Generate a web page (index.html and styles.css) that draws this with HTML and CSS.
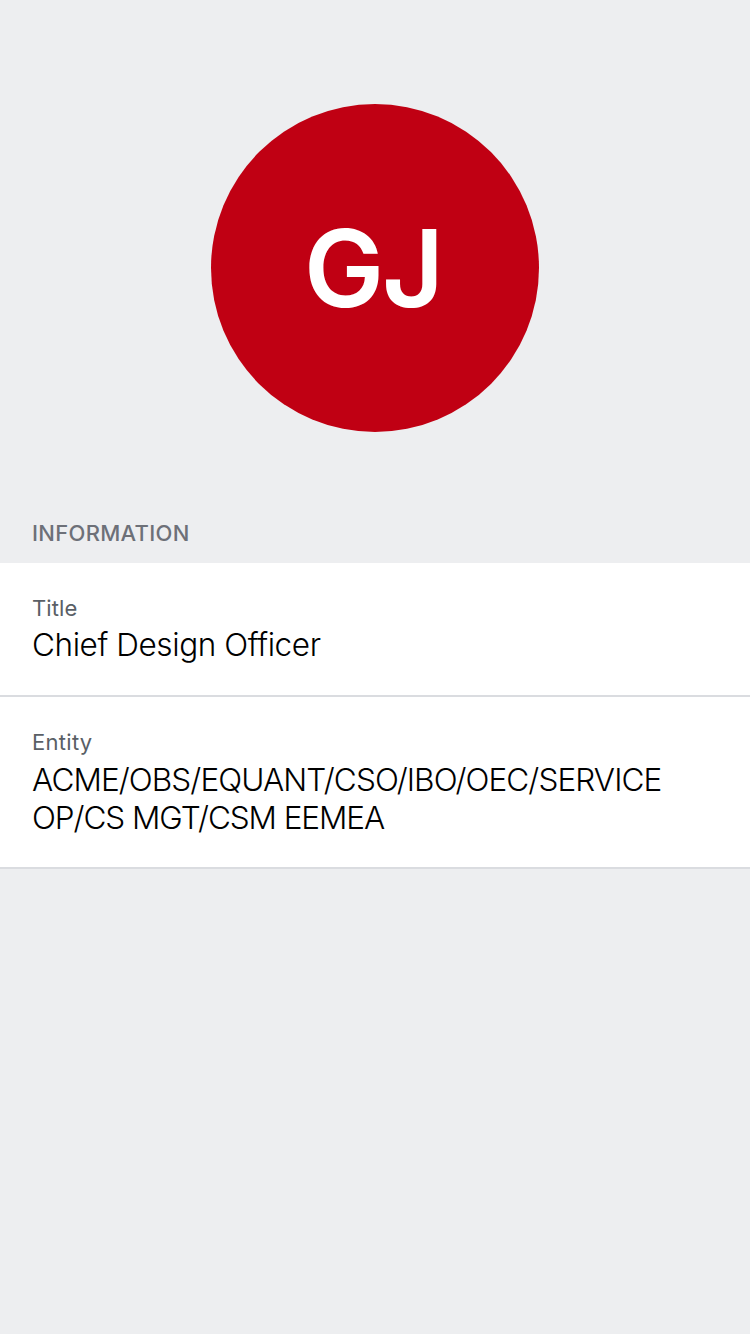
FILE: index.html
```html
<!DOCTYPE html>
<html lang="en">
<head>
<meta charset="utf-8">
<title>Profile</title>
<link rel="stylesheet" href="styles.css">
</head>
<body>
<main class="profile">
  <header class="hero">
    <div class="avatar"><span class="initials">GJ</span></div>
  </header>
  <h2 class="section-title">INFORMATION</h2>
  <dl class="info">
    <div class="row">
      <dt class="label label-title">Title</dt>
      <dd class="value value-title">Chief Design Officer</dd>
    </div>
    <div class="row row-entity">
      <dt class="label">Entity</dt>
      <dd class="value value-entity">ACME/OBS/EQUANT/CSO/IBO/OEC/SERVICE<br><span class="entity-end">OP/CS MGT/CSM EEMEA</span></dd>
    </div>
  </dl>
</main>
</body>
</html>
```
FILE: styles.css
```css
* { box-sizing: border-box; }
body {
  margin: 0;
  background: #edeef0;
  font-family: Inter, "Liberation Sans", sans-serif;
  color: #000;
}
.profile { min-height: 1334px; }
.hero {
  display: flex;
  justify-content: center;
  padding: 104px 0 88px;
}
.avatar {
  display: flex;
  align-items: center;
  justify-content: center;
  width: 328px;
  height: 328px;
  border-radius: 50%;
  background: #c00013;
}
.initials {
  padding: 1px 4px 0 0;
  color: #fff;
  font-size: 107px;
  font-weight: 570;
  line-height: 1;
  letter-spacing: -2.2px;
}
.section-title {
  margin: 0;
  padding: 0 32px;
  height: 43px;
  font-size: 22px;
  font-weight: 550;
  line-height: 26px;
  letter-spacing: 0.3px;
  color: #6d7078;
}
.info { margin: 0; background: #fff; }
.row {
  padding: 31px 32px;
  border-bottom: 2px solid #dadce0;
}
.row-entity { padding-bottom: 30px; }
.label {
  font-size: 22px;
  line-height: 28px;
  letter-spacing: 0.3px;
  color: #5a5f66;
}
.label-title { letter-spacing: 0.1px; }
.value {
  margin: 4px 0 0;
  font-size: 31.5px;
  font-weight: 300;
  line-height: 38px;
  white-space: nowrap;
}
.value-title { letter-spacing: -0.42px; }
.value-entity { margin-top: 5px; letter-spacing: -0.9px; }
.entity-end { letter-spacing: -1.07px; }
```
